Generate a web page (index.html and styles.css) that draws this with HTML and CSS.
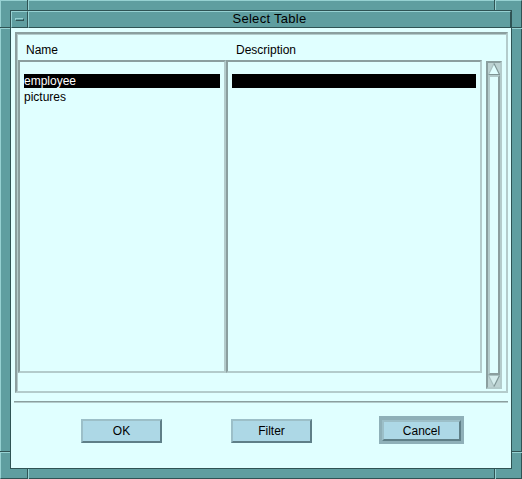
FILE: index.html
```html
<!DOCTYPE html>
<html>
<head>
<meta charset="utf-8">
<title>Select Table</title>
<link rel="stylesheet" href="styles.css">
</head>
<body>
<div class="win">
  <div class="inner">
    <div class="titlebar">
      <div class="menubtn"><span class="menubar"></span></div>
      <div class="title">Select Table</div>
    </div>
    <div class="content">
      <div class="panel">
        <div class="hdr hdr-name">Name</div>
        <div class="hdr hdr-desc">Description</div>
        <div class="list list-name">
          <div class="row sel">employee</div>
          <div class="row">pictures</div>
        </div>
        <div class="list list-desc">
          <div class="row sel"></div>
        </div>
        <div class="vsb">
          <div class="arrow">
            <svg width="12" height="12" viewBox="0 0 12 12">
              <polygon points="6,0.5 0.5,11.5 11.5,11.5" fill="#e0ffff"/>
              <path d="M0.5,11.5 L6,0.5" stroke="#a9c1c1" stroke-width="1.2" fill="none"/>
              <path d="M6,0.5 L11.5,11.5 L0.5,11.5" stroke="#7f9595" stroke-width="1.2" fill="none"/>
            </svg>
          </div>
          <div class="thumb"></div>
          <div class="arrow">
            <svg width="12" height="12" viewBox="0 0 12 12">
              <polygon points="0.5,0.5 11.5,0.5 6,11.5" fill="#d6eeee"/>
              <path d="M6,11.5 L0.5,0.5 L11.5,0.5" stroke="#a9c1c1" stroke-width="1.2" fill="none"/>
              <path d="M11.5,0.5 L6,11.5" stroke="#7f9595" stroke-width="1.2" fill="none"/>
            </svg>
          </div>
        </div>
      </div>
      <div class="sep"></div>
      <div class="btns">
        <div class="btn btn-ok">OK</div>
        <div class="btn btn-filter">Filter</div>
        <div class="default"><div class="btn btn-small">Cancel</div></div>
      </div>
    </div>
  </div>
  <span class="nv" style="left:26px;top:-1px"></span>
  <span class="nv" style="left:493px;top:-1px"></span>
  <span class="nv" style="left:26px;top:468px"></span>
  <span class="nv" style="left:493px;top:468px"></span>
  <span class="nh" style="left:-1px;top:26px"></span>
  <span class="nh" style="left:511px;top:26px"></span>
  <span class="nh" style="left:-1px;top:450px"></span>
  <span class="nh" style="left:511px;top:450px"></span>
</div>
</body>
</html>
```
FILE: styles.css
```css
* { box-sizing: border-box; }
html, body { margin: 0; padding: 0; }
body {
  width: 522px;
  height: 479px;
  overflow: hidden;
  background: #5f9ea0;
  font-family: "Liberation Sans", Arial, sans-serif;
  font-size: 12px;
  color: #000;
}
.win {
  position: relative;
  width: 522px;
  height: 479px;
  background: #5f9ea0;
  border: 1px solid;
  border-color: #96d1d2 #2f5354 #2f5354 #96d1d2;
  padding: 9px;
}
.inner {
  height: 100%;
  border: 1px solid #2f5354;
  display: flex;
  flex-direction: column;
  background: #e0ffff;
}
.titlebar {
  display: flex;
  height: 17px;
  flex: none;
  background: #5f9ea0;
}
.menubtn {
  width: 17px;
  border: 1px solid;
  border-color: #96d1d2 #2f5354 #2f5354 #96d1d2;
  display: flex;
  align-items: center;
  justify-content: center;
}
.menubar {
  display: block;
  width: 9px;
  height: 3px;
  border: 1px solid;
  border-color: #96d1d2 #2f5354 #2f5354 #96d1d2;
}
.title {
  flex: 1;
  border: 1px solid;
  border-color: #96d1d2 #2f5354 #2f5354 #96d1d2;
  text-align: center;
  font-size: 13px;
  line-height: 13px;
  letter-spacing: 0.3px;
}
.content {
  flex: 1;
  display: flex;
  flex-direction: column;
}
.panel {
  margin: 4px 3px 0 4px;
  height: 361px;
  flex: none;
  border: 2px solid;
  border-color: #8b9f9f #b3cbcb #b3cbcb #8b9f9f;
  padding: 1px;
  box-shadow: inset 1px 1px 0 #b3cbcb;
  display: grid;
  grid-template-columns: 208px 256px 4px 16px;
  grid-template-rows: 25px 313px 17px;
}
.hdr {
  padding-top: 8px;
  line-height: 14px;
  white-space: nowrap;
}
.hdr-name { grid-column: 1; grid-row: 1; padding-left: 8px; }
.hdr-desc { grid-column: 2; grid-row: 1; padding-left: 10px; }
.list {
  grid-row: 2;
  border: 2px solid;
  border-color: #8b9f9f #b3cbcb #b3cbcb #8b9f9f;
  padding: 12px 4px 0;
}
.list-name { grid-column: 1; }
.list-desc { grid-column: 2; }
.row {
  height: 14px;
  line-height: 14px;
  white-space: nowrap;
}
.row + .row { margin-top: 2px; }
.row.sel {
  background: #000;
  color: #fff;
}
.vsb {
  grid-column: 4;
  grid-row: 2 / 4;
  margin: 1px 0;
  border: 2px solid;
  border-color: #8b9f9f #b3cbcb #b3cbcb #8b9f9f;
  background: #bcd2d2;
  display: flex;
  flex-direction: column;
}
.arrow {
  height: 12px;
  flex: none;
}
.arrow svg { display: block; }
.thumb {
  flex: 1;
  border: 2px solid;
  border-color: #b3cbcb #8b9f9f #8b9f9f #b3cbcb;
  background: #e0ffff;
}
.sep {
  margin: 8px 3px 0 3px;
  height: 2px;
  flex: none;
  border-top: 1px solid #8b9f9f;
  border-bottom: 1px solid #b3cbcb;
}
.btns {
  display: flex;
  align-items: flex-start;
  padding: 13px 0 0 70px;
}
.btn {
  width: 81px;
  height: 24px;
  border: 2px solid;
  border-color: #9cbfc8 #5f7f87 #5f7f87 #9cbfc8;
  background: #add8e6;
  text-align: center;
  line-height: 20px;
  white-space: nowrap;
}
.btn-ok { margin-top: 3px; }
.btn-filter { margin-top: 3px; margin-left: 69px; }
.default {
  margin-left: 67px;
  width: 85px;
  height: 28px;
  border-style: solid;
  border-width: 4px 3px 3px 3px;
  border-color: #8fb0b8;
}
.btn-small {
  width: 79px;
  height: 21px;
  line-height: 19px;
}
.nv {
  position: absolute;
  width: 2px;
  height: 10px;
  border-left: 1px solid #2f5354;
  border-right: 1px solid #96d1d2;
}
.nh {
  position: absolute;
  width: 10px;
  height: 2px;
  border-top: 1px solid #2f5354;
  border-bottom: 1px solid #96d1d2;
}
```
